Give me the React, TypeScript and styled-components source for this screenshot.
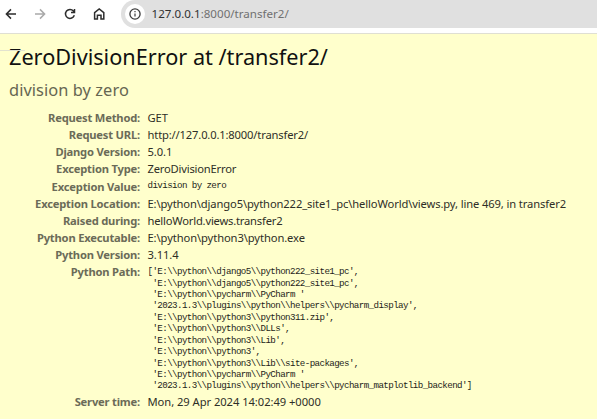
import React from "react";
import styled, { createGlobalStyle } from "styled-components";

const GlobalStyle = createGlobalStyle`
  *, *::before, *::after { box-sizing: border-box; }
  html, body { margin: 0; height: 100%; overflow: hidden; background: #ffffcc; }
  body { font-family: "Noto Sans", "Open Sans", sans-serif; }
`;

const Page = styled.div`
  width: 597px;
  height: 419px;
  overflow: hidden;
  background: #ffffcc;
`;

const Toolbar = styled.header`
  display: flex;
  align-items: flex-start;
  height: 34px;
  background: #ffffff;
  border-bottom: 1px solid #dfdfd3;
`;

const NavButtons = styled.nav`
  display: flex;
  width: 121px;
  height: 28px;
  padding: 6px 0 0 3px;
  gap: 13.3px;
`;

const NavButton = styled.button<{ $muted?: boolean }>`
  display: flex;
  width: 16px;
  height: 16px;
  flex: none;
  padding: 0;
  border: 0;
  background: none;
  color: ${(p) => (p.$muted ? "#a9a9a9" : "#2d2d2d")};
`;

const Icon = styled.svg`
  width: 16px;
  height: 16px;
  fill: none;
  stroke: currentColor;
  stroke-width: 1.5;
`;

const AddressBar = styled.div`
  display: flex;
  align-items: center;
  flex: 1;
  height: 28px;
  padding-left: 3.5px;
  border-radius: 14px 0 0 14px;
  background: #e0e0e0;
`;

const SiteInfo = styled.button`
  display: grid;
  place-items: center;
  width: 20px;
  height: 20px;
  margin-right: 7px;
  padding: 0;
  border: 0;
  border-radius: 50%;
  background: #ffffff;
  color: #3b3b3b;
`;

const Address = styled.span`
  font-size: 11.6px;
  line-height: 28px;
  color: #707070;
  white-space: nowrap;
`;

const Host = styled.span`
  color: #303030;
`;

const Summary = styled.main`
  position: relative;
  height: 385px;
  padding: 0 0 0 9px;

  &::before {
    content: "";
    position: absolute;
    top: 16px;
    left: 0;
    width: 25px;
    height: 1px;
    background: #e2e2cf;
  }
`;

const Title = styled.h1`
  height: 43px;
  margin: 0;
  padding-top: 7px;
  font-size: 21.7px;
  font-weight: 400;
  line-height: 32px;
  letter-spacing: -0.01px;
  color: #111;
  white-space: nowrap;
`;

const Reason = styled.p`
  height: 31.8px;
  margin: 0;
  font-size: 16.4px;
  line-height: 26px;
  letter-spacing: 0.06px;
  color: #666652;
`;

const Meta = styled.dl`
  margin: 0;
`;

const Row = styled.div<{ $height?: number }>`
  display: grid;
  grid-template-columns: 131px 1fr;
  column-gap: 7.5px;
  height: ${(p) => p.$height ?? 17.2}px;
  font-size: 11.2px;
  line-height: 17.2px;
  white-space: nowrap;
`;

const Label = styled.dt`
  font-weight: 700;
  letter-spacing: -0.2px;
  text-align: right;
  color: #6b6b58;
`;

const Value = styled.dd<{ $spacing: number }>`
  margin: 0;
  letter-spacing: ${(p) => p.$spacing}px;
  color: #2e2e27;
`;

const Code = styled.pre`
  margin: 0;
  padding-top: 2.7px;
  font-family: "Liberation Mono", monospace;
  font-size: 9.2px;
  line-height: 11.42px;
  letter-spacing: -0.6px;
  color: #1d1d18;
`;

interface Item {
  label: string;
  value: string;
  spacing?: number;
  code?: boolean;
  height?: number;
}

const pythonPath = String.raw`['E:\\python\\django5\\python222_site1_pc',
 'E:\\python\\django5\\python222_site1_pc',
 'E:\\python\\pycharm\\PyCharm '
 '2023.1.3\\plugins\\python\\helpers\\pycharm_display',
 'E:\\python\\python3\\python311.zip',
 'E:\\python\\python3\\DLLs',
 'E:\\python\\python3\\Lib',
 'E:\\python\\python3',
 'E:\\python\\python3\\Lib\\site-packages',
 'E:\\python\\pycharm\\PyCharm '
 '2023.1.3\\plugins\\python\\helpers\\pycharm_matplotlib_backend']`;

const items: Item[] = [
  { label: "Request Method:", value: "GET" },
  { label: "Request URL:", value: "http://127.0.0.1:8000/transfer2/", spacing: -0.16 },
  { label: "Django Version:", value: "5.0.1" },
  { label: "Exception Type:", value: "ZeroDivisionError", spacing: -0.2 },
  { label: "Exception Value:", value: "division by zero", code: true },
  {
    label: "Exception Location:",
    value: String.raw`E:\python\django5\python222_site1_pc\helloWorld\views.py, line 469, in transfer2`,
    spacing: -0.12,
  },
  { label: "Raised during:", value: "helloWorld.views.transfer2", spacing: -0.2 },
  { label: "Python Executable:", value: String.raw`E:\python\python3\python.exe` },
  { label: "Python Version:", value: "3.11.4" },
  { label: "Python Path:", value: pythonPath, code: true, height: 129.5 },
  { label: "Server time:", value: "Mon, 29 Apr 2024 14:02:49 +0000", spacing: -0.05 },
];

export default function App() {
  return (
    <Page>
      <GlobalStyle />
      <Toolbar>
        <NavButtons>
          <NavButton aria-label="Back">
            <Icon viewBox="0 0 16 16">
              <path d="M13 8H3.5M8 3.4L3.4 8L8 12.6" />
            </Icon>
          </NavButton>
          <NavButton aria-label="Forward" $muted>
            <Icon viewBox="0 0 16 16">
              <path d="M3 8h9.5M8 3.4L12.6 8L8 12.6" />
            </Icon>
          </NavButton>
          <NavButton aria-label="Reload">
            <Icon viewBox="0 0 16 16">
              <path d="M12.3 9.3A4.5 4.5 0 1 1 11.4 4.9L12.4 6M12.5 3v3.5H9" />
            </Icon>
          </NavButton>
          <NavButton aria-label="Home">
            <Icon viewBox="0 0 16 16">
              <path d="M3.6 13V6.7L8.2 3l4.6 3.7V13H10V9.2H6.4V13Z" />
            </Icon>
          </NavButton>
        </NavButtons>
        <AddressBar>
          <SiteInfo aria-label="Site information">
            <Icon viewBox="0 0 16 16">
              <circle cx="8" cy="8" r="5.1" strokeWidth="1.3" />
              <path d="M8 7.4v3.2M8 5v1.3" strokeWidth="1.2" />
            </Icon>
          </SiteInfo>
          <Address>
            <Host>127.0.0.1</Host>:8000/transfer2/
          </Address>
        </AddressBar>
      </Toolbar>
      <Summary>
        <Title>ZeroDivisionError at /transfer2/</Title>
        <Reason>division by zero</Reason>
        <Meta>
          {items.map((item) => (
            <Row key={item.label} $height={item.height}>
              <Label>{item.label}</Label>
              <Value $spacing={item.spacing ?? -0.1}>
                {item.code ? <Code>{item.value}</Code> : item.value}
              </Value>
            </Row>
          ))}
        </Meta>
      </Summary>
    </Page>
  );
}
